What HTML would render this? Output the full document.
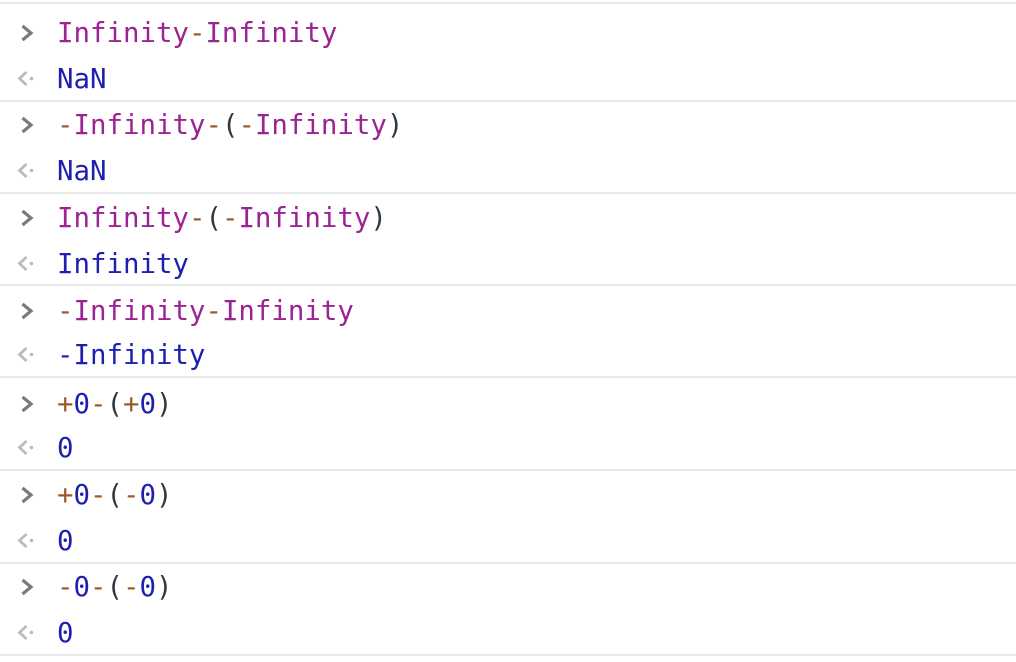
<!DOCTYPE html>
<html><head><meta charset="utf-8"><style>
body{margin:0;width:1016px;height:662px;background:#fff;position:relative;overflow:hidden;font-family:"DejaVu Sans Mono","Liberation Mono",monospace;font-size:27.4px}
.l{position:absolute;left:0;width:1016px;height:2px;background:#e8e8e8}
.t{position:absolute;left:57px;height:32px;line-height:32px;white-space:pre;margin-top:2px}
.p{color:#9b2393}.m{color:#9c5a2a}.b{color:#1c1fb0}.k{color:#303942}
svg{position:absolute}
</style></head><body>
<div class="l" style="top:2px"></div>
<div class="l" style="top:100px"></div>
<div class="l" style="top:192px"></div>
<div class="l" style="top:284px"></div>
<div class="l" style="top:376px"></div>
<div class="l" style="top:469px"></div>
<div class="l" style="top:562px"></div>
<div class="l" style="top:654px"></div>

<svg style="left:19px;top:24px" width="16" height="18"><path d="M3.5 2 L12 9 L3.5 16" stroke="#7a7a7a" stroke-width="3.2" fill="none"/></svg>
<div class="t" style="top:16px"><span class="p">Infinity</span><span class="m">-</span><span class="p">Infinity</span></div>
<svg style="left:16px;top:70px" width="20" height="17"><path d="M10.5 2 L3.5 8.5 L10.5 15" stroke="#bbb" stroke-width="2.8" fill="none"/><circle cx="15.5" cy="8.5" r="1.8" fill="#bbb"/></svg>
<div class="t b" style="top:62px">NaN</div>

<svg style="left:19px;top:116px" width="16" height="18"><path d="M3.5 2 L12 9 L3.5 16" stroke="#7a7a7a" stroke-width="3.2" fill="none"/></svg>
<div class="t" style="top:108px"><span class="m">-</span><span class="p">Infinity</span><span class="m">-</span><span class="k">(</span><span class="m">-</span><span class="p">Infinity</span><span class="k">)</span></div>
<svg style="left:16px;top:162px" width="20" height="17"><path d="M10.5 2 L3.5 8.5 L10.5 15" stroke="#bbb" stroke-width="2.8" fill="none"/><circle cx="15.5" cy="8.5" r="1.8" fill="#bbb"/></svg>
<div class="t b" style="top:154px">NaN</div>

<svg style="left:19px;top:209px" width="16" height="18"><path d="M3.5 2 L12 9 L3.5 16" stroke="#7a7a7a" stroke-width="3.2" fill="none"/></svg>
<div class="t" style="top:201px"><span class="p">Infinity</span><span class="m">-</span><span class="k">(</span><span class="m">-</span><span class="p">Infinity</span><span class="k">)</span></div>
<svg style="left:16px;top:255px" width="20" height="17"><path d="M10.5 2 L3.5 8.5 L10.5 15" stroke="#bbb" stroke-width="2.8" fill="none"/><circle cx="15.5" cy="8.5" r="1.8" fill="#bbb"/></svg>
<div class="t b" style="top:247px">Infinity</div>

<svg style="left:19px;top:302px" width="16" height="18"><path d="M3.5 2 L12 9 L3.5 16" stroke="#7a7a7a" stroke-width="3.2" fill="none"/></svg>
<div class="t" style="top:294px"><span class="m">-</span><span class="p">Infinity</span><span class="m">-</span><span class="p">Infinity</span></div>
<svg style="left:16px;top:346px" width="20" height="17"><path d="M10.5 2 L3.5 8.5 L10.5 15" stroke="#bbb" stroke-width="2.8" fill="none"/><circle cx="15.5" cy="8.5" r="1.8" fill="#bbb"/></svg>
<div class="t b" style="top:338px">-Infinity</div>

<svg style="left:19px;top:395px" width="16" height="18"><path d="M3.5 2 L12 9 L3.5 16" stroke="#7a7a7a" stroke-width="3.2" fill="none"/></svg>
<div class="t" style="top:387px"><span class="m">+</span><span class="b">0</span><span class="m">-</span><span class="k">(</span><span class="m">+</span><span class="b">0</span><span class="k">)</span></div>
<svg style="left:16px;top:439px" width="20" height="17"><path d="M10.5 2 L3.5 8.5 L10.5 15" stroke="#bbb" stroke-width="2.8" fill="none"/><circle cx="15.5" cy="8.5" r="1.8" fill="#bbb"/></svg>
<div class="t b" style="top:431px">0</div>

<svg style="left:19px;top:486px" width="16" height="18"><path d="M3.5 2 L12 9 L3.5 16" stroke="#7a7a7a" stroke-width="3.2" fill="none"/></svg>
<div class="t" style="top:478px"><span class="m">+</span><span class="b">0</span><span class="m">-</span><span class="k">(</span><span class="m">-</span><span class="b">0</span><span class="k">)</span></div>
<svg style="left:16px;top:532px" width="20" height="17"><path d="M10.5 2 L3.5 8.5 L10.5 15" stroke="#bbb" stroke-width="2.8" fill="none"/><circle cx="15.5" cy="8.5" r="1.8" fill="#bbb"/></svg>
<div class="t b" style="top:524px">0</div>

<svg style="left:19px;top:578px" width="16" height="18"><path d="M3.5 2 L12 9 L3.5 16" stroke="#7a7a7a" stroke-width="3.2" fill="none"/></svg>
<div class="t" style="top:570px"><span class="m">-</span><span class="b">0</span><span class="m">-</span><span class="k">(</span><span class="m">-</span><span class="b">0</span><span class="k">)</span></div>
<svg style="left:16px;top:624px" width="20" height="17"><path d="M10.5 2 L3.5 8.5 L10.5 15" stroke="#bbb" stroke-width="2.8" fill="none"/><circle cx="15.5" cy="8.5" r="1.8" fill="#bbb"/></svg>
<div class="t b" style="top:616px">0</div>
</body></html>
